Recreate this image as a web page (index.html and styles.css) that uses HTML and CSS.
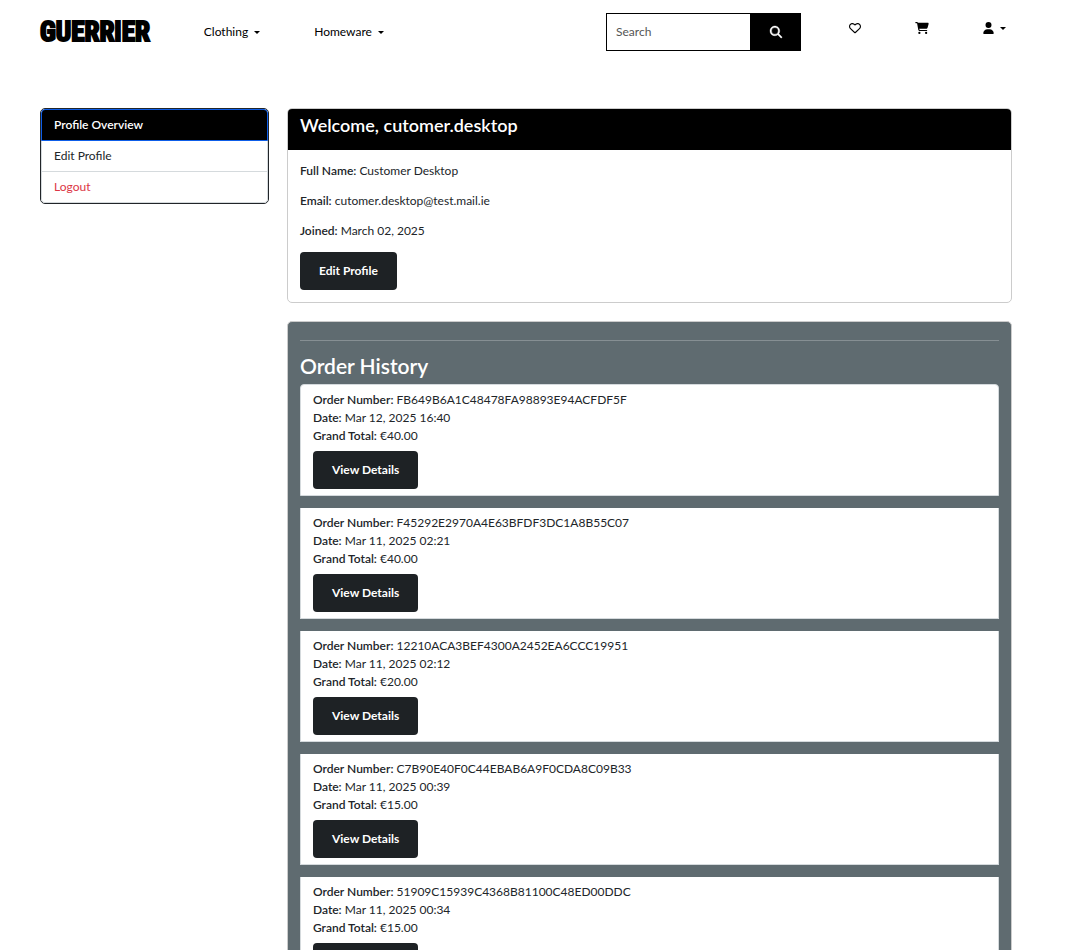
FILE: index.html
```html
<!DOCTYPE html>
<html lang="en">
<head>
<meta charset="utf-8">
<meta name="viewport" content="width=device-width, initial-scale=1">
<title>Guerrier - Profile</title>
<link rel="stylesheet" href="styles.css">
</head>
<body>
<header class="site-header">
  <a class="logo" href="#">GUERRIER</a>
  <nav class="main-nav">
    <button class="nav-toggle" type="button">Clothing<span class="caret"></span></button>
    <button class="nav-toggle" type="button">Homeware<span class="caret"></span></button>
  </nav>
  <form class="search">
    <input class="search-input" type="search" placeholder="Search" aria-label="Search">
    <button class="search-button" type="submit" aria-label="Submit search">
      <svg width="12" height="12" viewBox="0 0 512 512" fill="currentColor" stroke="currentColor" stroke-width="16" aria-hidden="true"><path d="M416 208c0 45.900-14.900 88.300-40 122.700L502.600 457.400c12.500 12.500 12.500 32.800 0 45.300s-32.800 12.500-45.300 0L330.700 376c-34.400 25.200-76.800 40-122.700 40C93.100 416 0 322.900 0 208S93.100 0 208 0S416 93.100 416 208zM208 352a144 144 0 1 0 0-288 144 144 0 1 0 0 288z"/></svg>
    </button>
  </form>
  <div class="actions">
    <a class="action" href="#" aria-label="Wishlist">
      <svg width="12" height="12" viewBox="0 0 512 512" fill="currentColor" aria-hidden="true"><path d="M225.800 468.200l-2.500-2.300L48.100 303.200C17.400 274.700 0 234.700 0 192.800v-3.300c0-70.400 50-130.800 119.200-144C158.600 37.900 198.900 47 231 69.600c9 6.400 17.400 13.800 25 22.300c4.200-4.800 8.700-9.200 13.500-13.300c3.700-3.200 7.500-6.200 11.500-9C313.100 47 353.400 37.900 392.800 45.400C462 58.600 512 119.100 512 189.500v3.300c0 41.900-17.400 81.900-48.100 110.400L288.700 465.900l-2.500 2.300c-8.200 7.600-19 11.900-30.200 11.900s-22-4.200-30.200-11.900zM239.100 145c-.4-.3-.7-.7-1-1.100l-17.800-20c-23.100-25.900-58-37.700-92-31.200C81.600 101.500 48 142.100 48 189.500v3.300c0 28.500 11.900 55.800 32.800 75.200L256 430.700 431.200 268c20.900-19.400 32.800-46.700 32.800-75.200v-3.300c0-47.300-33.600-88-80.100-96.900c-34-6.500-69 5.400-92 31.200l-17.800 20.100c-.3 .4-.7 .7-1 1.100c-4.500 4.500-10.600 7-16.900 7s-12.400-2.500-16.900-7z"/></svg>
    </a>
    <a class="action" href="#" aria-label="Cart">
      <svg width="14" height="12" viewBox="0 0 576 512" fill="currentColor" aria-hidden="true"><path d="M0 24C0 10.700 10.700 0 24 0h45.500c22 0 41.500 12.800 50.600 32h411c26.300 0 45.500 25 38.600 50.400l-41 152.300c-8.500 31.400-37 53.300-69.500 53.300H170.700l5.400 28.500c2.200 11.300 12.100 19.500 23.600 19.500H488c13.300 0 24 10.700 24 24s-10.700 24-24 24H199.700c-34.600 0-64.300-24.600-70.700-58.500L77.400 54.500C76.700 50.700 73.400 48 69.500 48H24C10.700 48 0 37.300 0 24zM128 464a48 48 0 1 1 96 0 48 48 0 1 1-96 0zm336-48a48 48 0 1 1 0 96 48 48 0 1 1 0-96z"/></svg>
    </a>
    <button class="action" type="button" aria-label="Account">
      <svg width="11" height="12" viewBox="0 0 448 512" fill="currentColor" aria-hidden="true"><path d="M224 256a128 128 0 1 0 0-256 128 128 0 1 0 0 256zM178.300 304C79.800 304 0 383.800 0 482.300C0 498.700 13.300 512 29.700 512h388.600c16.400 0 29.700-13.300 29.700-29.700C448 383.800 368.200 304 269.700 304z"/></svg>
      <span class="caret"></span>
    </button>
  </div>
</header>

<main class="profile">
  <aside>
    <nav class="side-menu" aria-label="Profile">
      <a class="side-link active" href="#">Profile Overview</a>
      <a class="side-link" href="#">Edit Profile</a>
      <a class="side-link danger" href="#">Logout</a>
    </nav>
  </aside>
  <div class="content">
    <section class="card">
      <div class="card-header"><h1 class="welcome">Welcome, cutomer.desktop</h1></div>
      <div class="card-body details">
        <p><strong>Full Name:</strong> Customer Desktop</p>
        <p><strong>Email:</strong> cutomer.desktop@test.mail.ie</p>
        <p><strong>Joined:</strong> March 02, 2025</p>
        <a class="button" href="#">Edit Profile</a>
      </div>
    </section>
    <section class="card card-slate">
      <div class="card-body">
        <hr class="rule">
        <h2 class="history-title">Order History</h2>
        <ul class="orders">
          <li class="order">
            <p><strong>Order Number:</strong> FB649B6A1C48478FA98893E94ACFDF5F</p>
            <p><strong>Date:</strong> Mar 12, 2025 16:40</p>
            <p><strong>Grand Total:</strong> €40.00</p>
            <a class="button" href="#">View Details</a>
          </li>
          <li class="order">
            <p><strong>Order Number:</strong> F45292E2970A4E63BFDF3DC1A8B55C07</p>
            <p><strong>Date:</strong> Mar 11, 2025 02:21</p>
            <p><strong>Grand Total:</strong> €40.00</p>
            <a class="button" href="#">View Details</a>
          </li>
          <li class="order">
            <p><strong>Order Number:</strong> 12210ACA3BEF4300A2452EA6CCC19951</p>
            <p><strong>Date:</strong> Mar 11, 2025 02:12</p>
            <p><strong>Grand Total:</strong> €20.00</p>
            <a class="button" href="#">View Details</a>
          </li>
          <li class="order">
            <p><strong>Order Number:</strong> C7B90E40F0C44EBAB6A9F0CDA8C09B33</p>
            <p><strong>Date:</strong> Mar 11, 2025 00:39</p>
            <p><strong>Grand Total:</strong> €15.00</p>
            <a class="button" href="#">View Details</a>
          </li>
          <li class="order">
            <p><strong>Order Number:</strong> 51909C15939C4368B81100C48ED00DDC</p>
            <p><strong>Date:</strong> Mar 11, 2025 00:34</p>
            <p><strong>Grand Total:</strong> €15.00</p>
            <a class="button" href="#">View Details</a>
          </li>
        </ul>
      </div>
    </section>
  </div>
</main>
</body>
</html>
```
FILE: styles.css
```css
*, *::before, *::after { box-sizing: border-box; }

html { scrollbar-width: none; }

body {
  margin: 0;
  background: #fff;
  color: #212529;
  font: 400 12px/18px Lato, "Liberation Sans", sans-serif;
}

h1, h2, p, ul { margin: 0; padding: 0; }
strong { font-weight: 600; }
a { color: inherit; text-decoration: none; }
button, input { font: inherit; color: inherit; border-radius: 0; }
svg { display: block; overflow: visible; }

.site-header {
  display: flex;
  align-items: center;
  padding: 13px 64px 57px 40px;
  color: #000;
}

.logo {
  margin-right: 54px;
  font: 700 27px/38px "Roboto Condensed", "Liberation Sans Narrow", "Liberation Sans", sans-serif;
  -webkit-text-stroke: 2px #000;
}

.main-nav { display: flex; gap: 54px; }

.nav-toggle, .action {
  display: flex;
  align-items: center;
  gap: 6px;
  padding: 0;
  border: 0;
  background: none;
  color: #000;
}

.caret {
  border-top: 3px solid;
  border-left: 3px solid transparent;
  border-right: 3px solid transparent;
}

.search { display: flex; width: 195px; height: 38px; margin-left: auto; }

.search-input {
  flex: 1;
  min-width: 0;
  padding: 0 9px;
  border: 1px solid #000;
  background: #fff;
  outline: 0;
  appearance: none;
}

.search-input::placeholder { color: #555; opacity: 1; }

.search-button {
  display: grid;
  place-items: center;
  width: 50px;
  padding: 0;
  border: 0;
  background: #000;
  color: #fff;
}

.actions { display: flex; gap: 54px; margin: 0 0 8px 48px; }

.profile {
  display: grid;
  grid-template-columns: minmax(0, 6fr) minmax(0, 19fr);
  gap: 18px;
  padding: 0 58px 0 40px;
}

.content { display: grid; gap: 18px; }

.side-menu {
  border: 1px solid #212529;
  border-radius: 5px;
  overflow: hidden;
}

.side-link {
  display: block;
  padding: 6px 12px;
  border: 1px solid #d5dadd;
  border-top: 0;
}

.side-link.active {
  border: 1px solid #0d5de8;
  border-radius: 4px 4px 0 0;
  background: #000;
  color: #fff;
  font-weight: 600;
}

.side-link:last-child { border-radius: 0 0 4px 4px; }
.side-link.danger { color: #dc3545; }

.card {
  overflow: hidden;
  border: 1px solid #ccc;
  border-radius: 5px;
  background: #fff;
}

.card-header { padding: 5px 12px 14px; background: #000; color: #fff; }
.welcome { font-size: 18px; line-height: 22px; font-weight: 600; }
.card-body { padding: 12px; }
.details p { margin-bottom: 12px; }
.card-slate { background: #5f6b70; }

.button {
  display: inline-block;
  padding: 10px 19px;
  border-radius: 4px;
  background: #1e2225;
  color: #fff;
  font-weight: 700;
  vertical-align: top;
}

.rule { margin: 6px 0 12px; border: 0; border-top: 1px solid #868f93; }

.history-title {
  margin-bottom: 6px;
  color: #fff;
  font-size: 21px;
  line-height: 25px;
  font-weight: 600;
}

.orders { display: grid; gap: 12px; list-style: none; }

.order {
  padding: 6px 12px;
  border: 1px solid #d5dadd;
  border-top: 0;
  background: #fff;
}

.order:first-child { border-top: 1px solid #d5dadd; border-radius: 4px 4px 0 0; }
.order .button { margin-top: 6px; }
```
